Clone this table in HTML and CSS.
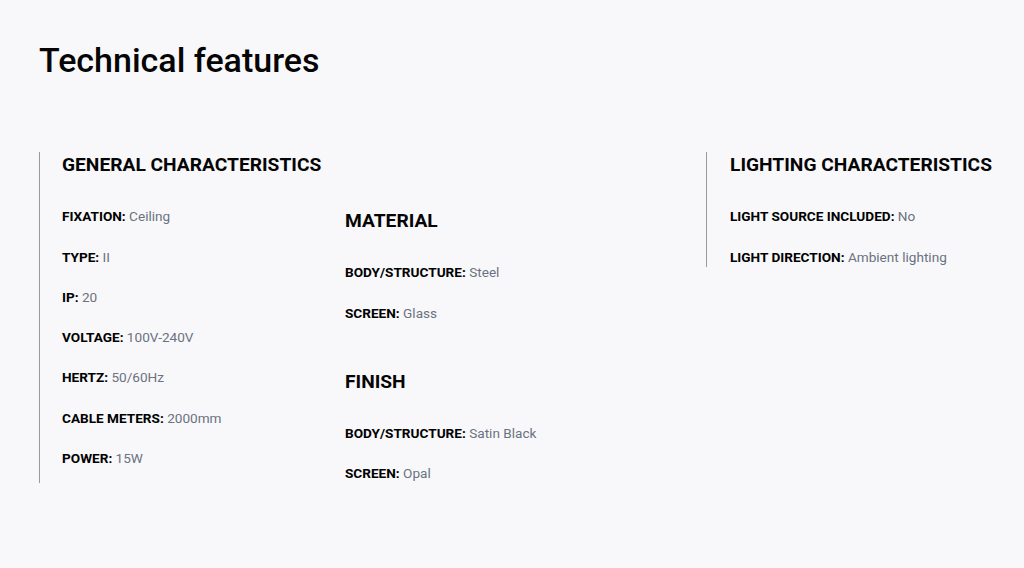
FILE: index.html
```html
<!DOCTYPE html>
<html lang="en">
<head>
<meta charset="utf-8">
<title>Technical features</title>
<link rel="stylesheet" href="styles.css">
</head>
<body>
<section class="features">
  <h1 class="features-title">Technical features</h1>
  <div class="features-grid">
    <div class="group group-general">
      <div class="col col-main">
        <h2 class="group-title">GENERAL CHARACTERISTICS</h2>
        <ul class="spec-list">
          <li><b>FIXATION:</b> <span>Ceiling</span></li>
          <li><b>TYPE:</b> <span>II</span></li>
          <li><b>IP:</b> <span>20</span></li>
          <li><b>VOLTAGE:</b> <span>100V-240V</span></li>
          <li><b>HERTZ:</b> <span>50/60Hz</span></li>
          <li><b>CABLE METERS:</b> <span>2000mm</span></li>
          <li><b>POWER:</b> <span>15W</span></li>
        </ul>
      </div>
      <div class="col col-sub">
        <div class="subgroup">
          <h3 class="subgroup-title">MATERIAL</h3>
          <ul class="spec-list">
            <li><b>BODY/STRUCTURE:</b> <span>Steel</span></li>
            <li><b>SCREEN:</b> <span>Glass</span></li>
          </ul>
        </div>
        <div class="subgroup">
          <h3 class="subgroup-title">FINISH</h3>
          <ul class="spec-list">
            <li><b>BODY/STRUCTURE:</b> <span>Satin Black</span></li>
            <li><b>SCREEN:</b> <span>Opal</span></li>
          </ul>
        </div>
      </div>
    </div>
    <div class="group group-lighting">
      <div class="col">
        <h2 class="group-title">LIGHTING CHARACTERISTICS</h2>
        <ul class="spec-list">
          <li><b>LIGHT SOURCE INCLUDED:</b> <span>No</span></li>
          <li><b>LIGHT DIRECTION:</b> <span>Ambient lighting</span></li>
        </ul>
      </div>
    </div>
  </div>
</section>
</body>
</html>
```

FILE: styles.css
```css
* { box-sizing: border-box; }
html, body { margin: 0; padding: 0; }
body {
  background: #f8f8fa;
  font-family: Roboto, "Liberation Sans", Arial, sans-serif;
  color: #000;
  width: 1024px;
  height: 568px;
  overflow: hidden;
}
.features {
  padding: 38px 0 0 39px;
}
.features-title {
  margin: 0;
  font-size: 34px;
  font-weight: 500;
  line-height: 44px;
  color: #050505;
}
.features-grid {
  display: flex;
  margin-top: 70px;
  align-items: flex-start;
}
.group {
  border-left: 1px solid #9a9a9a;
  padding-left: 22px;
  display: flex;
}
.group-general {
  width: 667px;
}
.group-lighting {
  flex: 1;
  padding-left: 23px;
}
.col-main {
  width: 283px;
}
.col-sub {
  padding-top: 56px;
}
.group-title,
.subgroup-title {
  margin: 0;
  font-size: 19.2px;
  font-weight: 700;
  line-height: 26px;
  color: #050505;
  white-space: nowrap;
}
.spec-list {
  list-style: none;
  margin: 0;
  padding: 8px 0 0 0;
}
.spec-list li {
  font-size: 13.6px;
  line-height: 20px;
  margin-top: 20.3px;
  white-space: nowrap;
}
.spec-list li b {
  font-weight: 700;
  color: #000;
}
.spec-list li span {
  color: #6b7280;
}
.subgroup + .subgroup {
  margin-top: 46px;
}
```
